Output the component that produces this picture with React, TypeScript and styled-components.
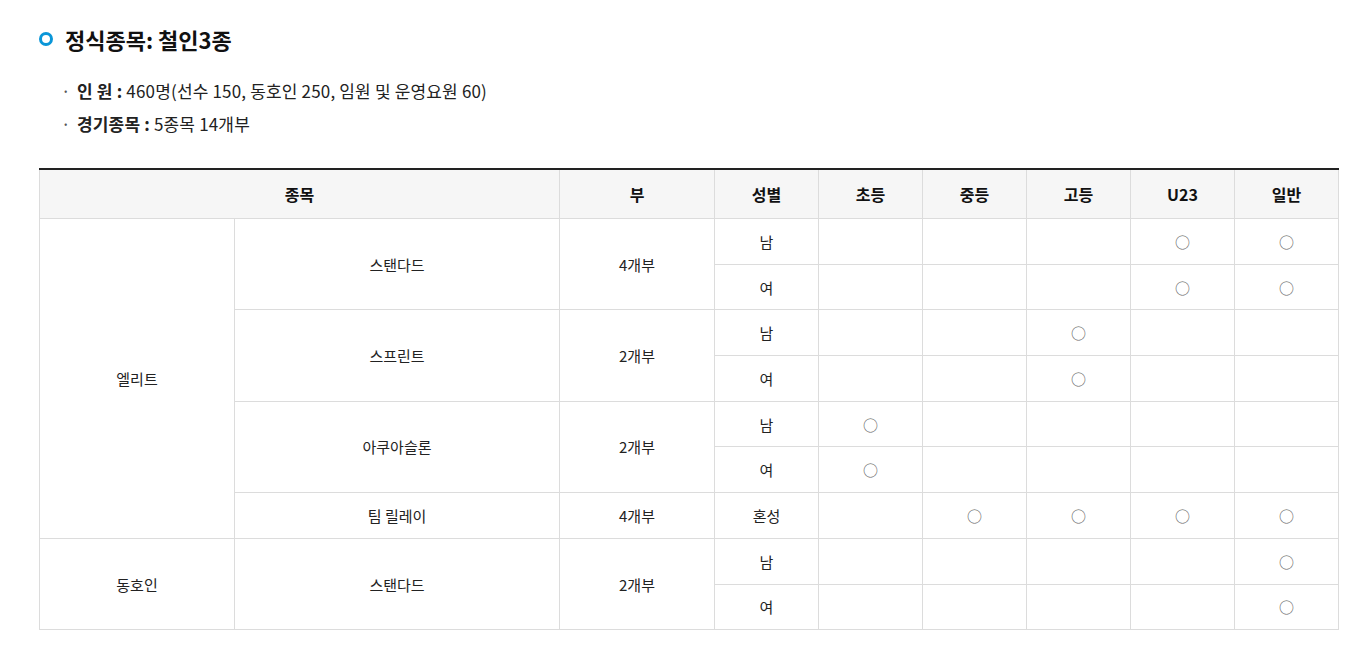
import styled, { createGlobalStyle } from 'styled-components';

const GlobalStyle = createGlobalStyle`
  body {
    margin: 0;
    background: #fff;
    font-family: "Noto Sans CJK KR", "Noto Sans", sans-serif;
    color: #222;
  }
`;

const Page = styled.div`
  padding: 22px 0 0 39px;
  width: 1299px;
`;

const Title = styled.h3`
  margin: 0;
  display: flex;
  align-items: center;
  gap: 12px;
  font-size: 22px;
  font-weight: 700;
  line-height: 34px;
  color: #111;

  &::before {
    content: '';
    width: 8px;
    height: 8px;
    border: 3px solid #0a96d8;
    border-radius: 50%;
    flex: none;
  }
`;

const InfoList = styled.ul`
  list-style: none;
  margin: 22px 0 0;
  padding: 0 0 0 22px;
  display: flex;
  flex-direction: column;
  gap: 7px;
`;

const InfoItem = styled.li`
  position: relative;
  padding-left: 16px;
  font-size: 17px;
  line-height: 26px;
  color: #222;
  letter-spacing: 0.01em;

  &::before {
    content: '·';
    position: absolute;
    left: 0;
    top: 0;
    color: #555;
  }

  b {
    font-weight: 700;
  }
`;

const Table = styled.table`
  margin-top: 31px;
  width: 1299px;
  border-collapse: collapse;
  table-layout: fixed;
  border-top: 2px solid #222;
  font-size: 15px;
  color: #222;

  th,
  td {
    border: 1px solid #dcdcdc;
    text-align: center;
    vertical-align: middle;
    padding: 0;
  }
  th {
    height: 48px;
    background: #f6f6f6;
    font-weight: 700;
    font-size: 16px;
    color: #111;
  }
  td {
    height: 44.7px;
  }
  tr:first-child th {
    border-top: 0;
  }
`;

const Mark = styled.span`
  font-size: 15px;
  color: #666;
`;

const COLS = [195, 325, 155, 104, 104, 104, 104, 104, 104];

type Row = {
  group?: { name: string; span: number };
  event?: { name: string; count: string; span: number };
  sex: string;
  marks: boolean[];
};

const rows: Row[] = [
  { group: { name: '엘리트', span: 7 }, event: { name: '스탠다드', count: '4개부', span: 2 }, sex: '남', marks: [false, false, false, true, true] },
  { sex: '여', marks: [false, false, false, true, true] },
  { event: { name: '스프린트', count: '2개부', span: 2 }, sex: '남', marks: [false, false, true, false, false] },
  { sex: '여', marks: [false, false, true, false, false] },
  { event: { name: '아쿠아슬론', count: '2개부', span: 2 }, sex: '남', marks: [true, false, false, false, false] },
  { sex: '여', marks: [true, false, false, false, false] },
  { event: { name: '팀 릴레이', count: '4개부', span: 1 }, sex: '혼성', marks: [false, true, true, true, true] },
  { group: { name: '동호인', span: 2 }, event: { name: '스탠다드', count: '2개부', span: 2 }, sex: '남', marks: [false, false, false, false, true] },
  { sex: '여', marks: [false, false, false, false, true] },
];

export default function App() {
  return (
    <Page>
      <GlobalStyle />
      <Title>정식종목: 철인3종</Title>
      <InfoList>
        <InfoItem>
          <b>인 원 :</b> 460명(선수 150, 동호인 250, 임원 및 운영요원 60)
        </InfoItem>
        <InfoItem>
          <b>경기종목 :</b> 5종목 14개부
        </InfoItem>
      </InfoList>
      <Table>
        <colgroup>
          {COLS.map((w, i) => (
            <col key={i} style={{ width: w }} />
          ))}
        </colgroup>
        <thead>
          <tr>
            <th colSpan={2}>종목</th>
            <th>부</th>
            <th>성별</th>
            <th>초등</th>
            <th>중등</th>
            <th>고등</th>
            <th>U23</th>
            <th>일반</th>
          </tr>
        </thead>
        <tbody>
          {rows.map((r, i) => (
            <tr key={i}>
              {r.group && <td rowSpan={r.group.span}>{r.group.name}</td>}
              {r.event && <td rowSpan={r.event.span}>{r.event.name}</td>}
              {r.event && <td rowSpan={r.event.span}>{r.event.count}</td>}
              <td>{r.sex}</td>
              {r.marks.map((m, j) => (
                <td key={j}>{m && <Mark>○</Mark>}</td>
              ))}
            </tr>
          ))}
        </tbody>
      </Table>
    </Page>
  );
}
